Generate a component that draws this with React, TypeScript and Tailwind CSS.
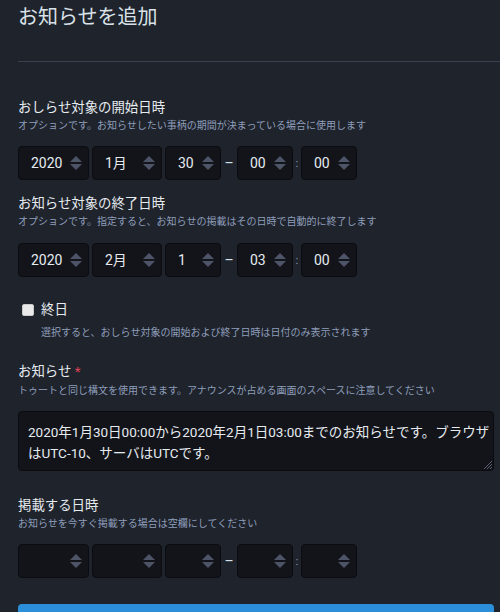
import React from "react";

const font = "font-['Roboto','Noto_Sans_CJK_JP',sans-serif]";

const Arrows = () => (
    <svg width="12" height="14" viewBox="0 0 12 14" className="shrink-0">
        <polygon points="6,0 12,6 0,6" fill="#4d5468" />
        <polygon points="0,8 12,8 6,14" fill="#4d5468" />
    </svg>
);

const Select = ({ value, width }: { value: string; width: string }) => (
    <div
        className={`${width} h-[34px] flex items-center justify-between pl-3 pr-[6px] bg-[#131419] border border-[#0b0c0f] rounded-[4px] text-[14px] text-[#e6ebf0]`}
    >
        <span>{value}</span>
        <Arrows />
    </div>
);

const DateTimeRow = ({ values }: { values: string[] }) => (
    <div className="flex items-center">
        <Select value={values[0]} width="w-[71px]" />
        <div className="w-[3px]" />
        <Select value={values[1]} width="w-[70px]" />
        <div className="w-[3px]" />
        <Select value={values[2]} width="w-[56px]" />
        <span className="w-[16px] text-center text-[14px] text-[#d9e1e8]">–</span>
        <Select value={values[3]} width="w-[56px]" />
        <span className="w-[8px] text-center text-[10px] text-[#9baec8]">:</span>
        <Select value={values[4]} width="w-[56px]" />
    </div>
);

const Label = ({ children, className = "" }: { children: React.ReactNode; className?: string }) => (
    <div className={`text-[13.4px] leading-[20px] font-normal text-[#e6ebf0] ${className}`}>{children}</div>
);

const Hint = ({ children, className = "" }: { children: React.ReactNode; className?: string }) => (
    <div className={`text-[10px] leading-[16px] text-[#8e9ebb] ${className}`}>{children}</div>
);

export default function App() {
    return (
        <div className={`${font} min-h-[612px] w-[500px] bg-[#1f232b] pt-[3px] overflow-hidden`}>
            {/* Title */}
            <h1 className="pl-[18px] text-[20px] leading-[28px] font-normal text-[#d9e1e8]">お知らせを追加</h1>
            <hr className="ml-[18px] mt-[30px] border-0 border-t border-[#393f4f]" />

            <div className="pl-[18px] pr-[6px]">
                {/* Start */}
                <Label className="mt-[36px]">おしらせ対象の開始日時</Label>
                <Hint>オプションです。お知らせしたい事柄の期間が決まっている場合に使用します</Hint>
                <div className="mt-[12px]">
                    <DateTimeRow values={["2020", "1月", "30", "00", "00"]} />
                </div>

                {/* End */}
                <Label className="mt-[14px]">お知らせ対象の終了日時</Label>
                <Hint>オプションです。指定すると、お知らせの掲載はその日時で自動的に終了します</Hint>
                <div className="mt-[13px]">
                    <DateTimeRow values={["2020", "2月", "1", "03", "00"]} />
                </div>

                {/* All day */}
                <div className="mt-[23px] flex items-center gap-[7px] pl-[4px] h-[20px]">
                    <div className="w-[12px] h-[12px] rounded-[2px] bg-[#e9e9ea] border border-[#c9cacd]" />
                    <span className="text-[13.4px] text-[#e6ebf0]">終日</span>
                </div>
                <Hint className="mt-[5px] pl-[23px]">選択すると、おしらせ対象の開始および終了日時は日付のみ表示されます</Hint>

                {/* Text */}
                <Label className="mt-[21px]">
                    お知らせ <span className="text-[#df405a]">*</span>
                </Label>
                <Hint className="mt-[1px]">トゥートと同じ構文を使用できます。アナウンスが占める画面のスペースに注意してください</Hint>
                <div className="relative mt-[12px] h-[60px] bg-[#131419] border border-[#0b0c0f] rounded-[4px] px-[9px] pt-[10px] text-[13.5px] leading-[21px] text-[#e6ebf0]">
                    <div className="whitespace-nowrap">2020年1月30日00:00から2020年2月1日03:00までのお知らせです。ブラウザ</div>
                    <div>はUTC-10、サーバはUTCです。</div>
                    <svg width="9" height="9" viewBox="0 0 9 9" className="absolute right-[1px] bottom-[1px]">
                        <path d="M9 1 L1 9 M9 4 L4 9 M9 7 L7 9" stroke="#5a6072" strokeWidth="1" />
                    </svg>
                </div>

                {/* Publish */}
                <Label className="mt-[25px]">掲載する日時</Label>
                <Hint>お知らせを今すぐ掲載する場合は空欄にしてください</Hint>
                <div className="mt-[12px]">
                    <DateTimeRow values={["", "", "", "", ""]} />
                </div>

                <button className="mt-[26px] w-full h-[40px] rounded-[4px] bg-[#2b90d9] text-white text-[14px] font-medium">
                    お知らせを追加
                </button>
            </div>
        </div>
    );
}
